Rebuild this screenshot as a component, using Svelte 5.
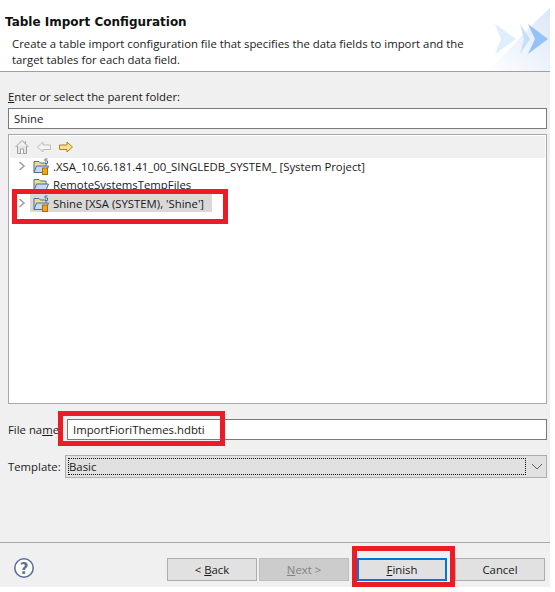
<script>
  const nodes = [
    { label: ".XSA_10.66.181.41_00_SINGLEDB_SYSTEM_ [System Project]", arrow: true, project: true },
    { label: "RemoteSystemsTempFiles", arrow: false, project: false },
    { label: "Shine [XSA (SYSTEM), 'Shine']", arrow: true, project: true, selected: true }
  ];
</script>

<div class="dialog">
  <header class="banner">
    <h1>Table Import Configuration</h1>
    <p>Create a table import configuration file that specifies the data fields to import and the<br />target tables for each data field.</p>
    <svg class="wizard" width="90" height="71" viewBox="0 0 90 71">
      <defs>
        <linearGradient id="fade" x1="0" y1="1" x2="1" y2="0">
          <stop offset="0" stop-color="#ffffff" />
          <stop offset="1" stop-color="#dbe7f8" />
        </linearGradient>
      </defs>
      <path d="M24 71 C44 60 64 30 90 8 V71 Z" fill="url(#fade)" />
      <path d="M35 24 L56 39 L35 54 L41 39 Z" fill="#dfeefd" />
      <path d="M60 24 L70 39 L60 54 L64 39 Z" fill="#c4e0fb" />
      <path d="M68 24 L88 39 L68 54 L75 39 Z" fill="#93c2f7" />
    </svg>
  </header>

  <main class="body">
    <label class="folder-label" for="folder"><u>E</u>nter or select the parent folder:</label>
    <div class="field" id="folder">Shine</div>

    <section class="tree">
      <div class="toolbar">
        <svg width="16" height="16" viewBox="0 0 16 16" fill="none" stroke="#a0a0a0">
          <path d="M1.5 8 L8 1.5 L14.5 8" />
          <path d="M3.5 7 V14.5 H12.5 V7" fill="#e4e4e4" />
          <path d="M6.5 14.5 V10 H9.5 V14.5" fill="#fff" />
          <path d="M11.5 2 V5" />
        </svg>
        <svg width="16" height="16" viewBox="0 0 16 16" fill="#f4f4f4" stroke="#bdbdbd">
          <path d="M1.5 8 L7 3 V6 H14.5 V10.5 H7 V13 Z" />
        </svg>
        <svg width="16" height="16" viewBox="0 0 16 16" fill="#fbe08e" stroke="#b07f20">
          <path d="M14.5 8 L9 3 V6 H1.5 V10.5 H9 V13 Z" />
        </svg>
      </div>
      {#each nodes as node}
        <div class="row">
          <span class="twist">
            {#if node.arrow}
              <svg width="8" height="10" viewBox="0 0 8 10" fill="none" stroke="#a0a0a0" stroke-width="1.6"><path d="M1.5 1 L6 5 L1.5 9" /></svg>
            {/if}
          </span>
          <span class="node" class:selected={node.selected}>
            <svg width="17" height="17" viewBox="0 0 17 17">
              <path d="M1 14.5 V3.5 H6 L7.5 5 H13 V14.5 Z" fill="#f5d98f" stroke="#4a6f9f" />
              <path d="M1 14.5 L3.5 8 H15.5 L13 14.5 Z" fill="#c5daf2" stroke="#4a6f9f" />
              {#if node.project}
                <path d="M14.5 1 H12 V3 H14.5 V5.5 H12" fill="none" stroke="#55708f" />
                <rect x="9.5" y="10" width="5" height="6.5" fill="#f0a818" stroke="#a86e08" />
              {/if}
            </svg>
            <span>{node.label}</span>
          </span>
        </div>
      {/each}
    </section>

    <div class="name-row">
      <label for="fname">File na<u>m</u>e</label>
      <div class="field grow" id="fname">ImportFioriThemes.hdbti</div>
    </div>

    <div class="template-row">
      <span class="template-label">Template:</span>
      <div class="combo">
        <span class="combo-value">Basic</span>
        <svg width="12" height="7" viewBox="0 0 12 7" fill="none" stroke="#606060"><path d="M1 1 L6 6 L11 1" /></svg>
      </div>
    </div>
  </main>

  <footer class="actions">
    <svg class="help" width="22" height="22" viewBox="0 0 22 22">
      <circle cx="11" cy="11" r="9.2" fill="#fff" stroke="#5b7398" stroke-width="1.6" />
      <text x="11" y="16.5" text-anchor="middle" class="qmark">?</text>
    </svg>
    <div class="buttons">
      <button>&lt; <u>B</u>ack</button>
      <button class="disabled"><u>N</u>ext &gt;</button>
      <button class="primary"><u>F</u>inish</button>
      <button>Cancel</button>
    </div>
  </footer>

  <div class="mark mark-tree"></div>
  <div class="mark mark-name"></div>
  <div class="mark mark-finish"></div>
</div>

<style>
  :global(body) {
    margin: 0;
    background: #fff;
  }
  .dialog {
    position: relative;
    width: 550px;
    height: 587px;
    display: flex;
    flex-direction: column;
    background: #f0f0f0;
    font-family: "Open Sans", "Noto Sans", sans-serif;
    font-size: 11.35px;
    color: #1a1a1a;
    overflow: hidden;
  }
  .banner {
    position: relative;
    height: 71px;
    flex: none;
    background: #fff;
    border-bottom: 1px solid #a0a0a0;
  }
  .banner h1 {
    margin: 0;
    padding: 14px 0 0 5px;
    font-family: "DejaVu Sans", sans-serif;
    font-size: 12px;
    line-height: 16px;
    font-weight: bold;
    color: #111;
  }
  .banner p {
    position: relative;
    z-index: 1;
    margin: 0;
    padding: 6px 0 0 12px;
    line-height: 16px;
    white-space: nowrap;
  }
  .wizard {
    position: absolute;
    right: 0;
    top: 0;
  }
  .body {
    flex: 1;
    display: flex;
    flex-direction: column;
    padding: 0 3px 0 8px;
  }
  .folder-label {
    margin-top: 16px;
    height: 20px;
    line-height: 18px;
  }
  .field {
    box-sizing: border-box;
    height: 21px;
    border: 1px solid #7a7a7a;
    background: #fff;
    line-height: 19px;
    padding-left: 5px;
  }
  .tree {
    box-sizing: border-box;
    margin-top: 5px;
    height: 270px;
    border: 1px solid #a8a8a8;
    background: #fff;
    padding: 1px;
  }
  .toolbar {
    height: 22px;
    margin-bottom: -1px;
    display: flex;
    align-items: center;
    gap: 6px;
    padding-left: 4px;
    background: #f0f0f0;
  }
  .row {
    height: 18.5px;
    display: flex;
    align-items: center;
    white-space: nowrap;
  }
  .twist {
    width: 20px;
    padding-left: 8px;
    box-sizing: border-box;
    display: flex;
    align-items: center;
    flex: none;
  }
  .node {
    display: flex;
    align-items: center;
    gap: 3px;
    height: 18px;
    padding: 0 8px 0 3px;
  }
  .node.selected {
    background: #d9d9d9;
  }
  .name-row {
    display: flex;
    align-items: center;
    margin-top: 15px;
  }
  .name-row label {
    width: 59px;
    flex: none;
  }
  .grow {
    flex: 1;
  }
  .template-row {
    display: flex;
    align-items: center;
    margin-top: 15px;
  }
  .template-label {
    width: 57px;
    flex: none;
  }
  .combo {
    box-sizing: border-box;
    flex: 1;
    height: 23px;
    display: flex;
    align-items: center;
    border: 1px solid #adadad;
    background: #e1e1e1;
    padding: 2px 3px 2px 2px;
    gap: 5px;
  }
  .combo-value {
    flex: 1;
    height: 100%;
    box-sizing: border-box;
    border: 1px dotted #111;
    line-height: 15px;
  }
  .actions {
    position: relative;
    box-sizing: border-box;
    height: 45px;
    flex: none;
    border-top: 1px solid #a8a8a8;
    display: flex;
    justify-content: space-between;
    padding: 14px 5px 6px 13px;
  }
  .buttons {
    display: flex;
    gap: 2px;
    padding-top: 1px;
  }
  .qmark {
    font-family: "DejaVu Sans", sans-serif;
    font-size: 15px;
    font-weight: bold;
    fill: #5b7398;
  }
  button {
    box-sizing: border-box;
    width: 90px;
    height: 23px;
    padding: 0;
    border: 1px solid #adadad;
    background: #e1e1e1;
    font: inherit;
    color: #1a1a1a;
  }
  button.disabled {
    background: #ccc;
    border-color: #bfbfbf;
    color: #838383;
  }
  button.primary {
    border: 2px solid #0078d7;
    margin: 0 6px;
  }
  .mark {
    position: absolute;
    box-sizing: border-box;
    border: 5px solid #ed1c24;
    pointer-events: none;
  }
  .mark-tree {
    left: 12px;
    top: 189px;
    width: 216px;
    height: 35px;
  }
  .mark-name {
    left: 58px;
    top: 411px;
    width: 167px;
    height: 35px;
  }
  .mark-finish {
    left: 352px;
    top: 546px;
    width: 103px;
    height: 41px;
  }
</style>
